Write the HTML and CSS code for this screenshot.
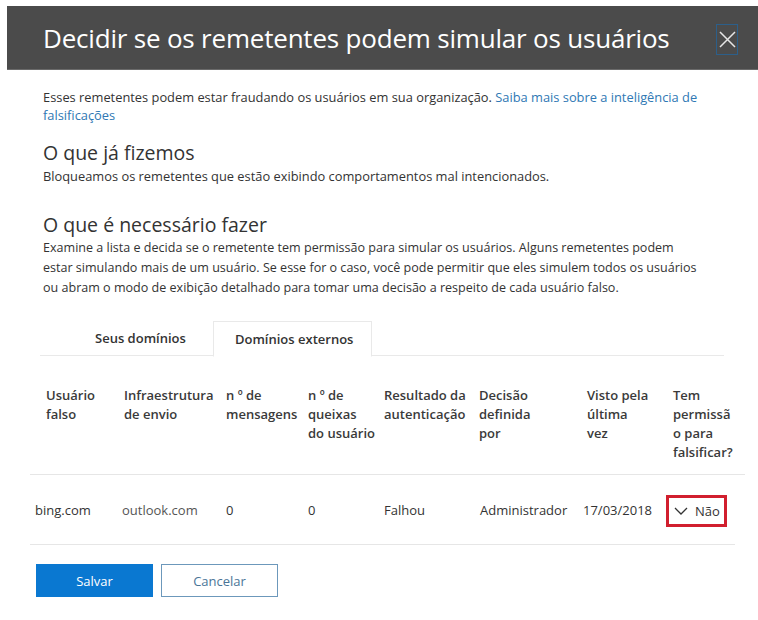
FILE: index.html
```html
<!DOCTYPE html>
<html lang="pt-BR">
<head>
<meta charset="utf-8">
<title>Decidir se os remetentes podem simular os usuários</title>
<link rel="stylesheet" href="styles.css">
</head>
<body>
<div class="panel">
  <header class="head">
    <h1 class="title">Decidir se os remetentes podem simular os usuários</h1>
    <button class="close" aria-label="Fechar">
      <svg width="17" height="17" viewBox="0 0 17 17"><path d="M1 1 L16 16 M16 1 L1 16" stroke="#e6e6e6" stroke-width="1.5" fill="none"/></svg>
    </button>
  </header>
  <main class="content">
    <p class="intro">Esses remetentes podem estar fraudando os usuários em sua organização. <a href="#" class="link">Saiba mais sobre a inteligência de<br>falsificações</a></p>
    <h2 class="section-title first">O que já fizemos</h2>
    <p class="text">Bloqueamos os remetentes que estão exibindo comportamentos mal intencionados.</p>
    <h2 class="section-title second">O que é necessário fazer</h2>
    <p class="text para">Examine a lista e decida se o remetente tem permissão para simular os usuários. Alguns remetentes podem<br>estar simulando mais de um usuário. Se esse for o caso, você pode permitir que eles simulem todos os usuários<br>ou abram o modo de exibição detalhado para tomar uma decisão a respeito de cada usuário falso.</p>

    <div class="tabs">
      <div class="tab">Seus domínios</div>
      <div class="tab active">Domínios externos</div>
    </div>

    <div class="table">
      <div class="thead">
        <div>Usuário<br>falso</div>
        <div>Infraestrutura<br>de envio</div>
        <div>n º de<br>mensagens</div>
        <div>n º de<br>queixas<br>do usuário</div>
        <div>Resultado da<br>autenticação</div>
        <div>Decisão<br>definida<br>por</div>
        <div>Visto pela<br>última<br>vez</div>
        <div>Tem<br>permissã<br>o para<br>falsificar?</div>
      </div>
      <div class="trow">
        <div>bing.com</div>
        <div class="muted">outlook.com</div>
        <div>0</div>
        <div>0</div>
        <div>Falhou</div>
        <div>Administrador</div>
        <div>17/03/2018</div>
        <div><span class="select"><svg width="14" height="8" viewBox="0 0 14 8"><path d="M1 1 L7 7 L13 1" stroke="#333" stroke-width="1.3" fill="none"/></svg>Não</span></div>
      </div>
    </div>

    <div class="actions">
      <button class="btn primary">Salvar</button>
      <button class="btn secondary">Cancelar</button>
    </div>
  </main>
</div>
</body>
</html>
```
FILE: styles.css
```css
* { box-sizing: border-box; }
html, body { margin: 0; padding: 0; background: #fff; }
body {
  font-family: "Open Sans", "Noto Sans", sans-serif;
  color: #333;
  width: 758px;
  height: 620px;
  overflow: hidden;
}
.panel { padding: 6px 0 0 7px; }
.head {
  height: 64px;
  background: #4b4b4b;
  display: flex;
  align-items: center;
  justify-content: space-between;
  padding: 0 20px 0 36px;
  border-bottom: 1px solid #6a6a6a;
}
.title {
  margin: 0;
  font-weight: 400;
  font-size: 26px;
  color: #fff;
  letter-spacing: -0.2px;
}
.close {
  width: 22px;
  height: 31px;
  padding: 0;
  margin-top: 4px;
  background: transparent;
  border: 1px solid #2c5f8a;
  display: flex;
  align-items: center;
  justify-content: center;
}
.content { padding: 18px 0 0 36px; }
.intro, .text {
  margin: 0;
  font-size: 12.85px;
  line-height: 18px;
  white-space: nowrap;
}
.text { line-height: 20px; }
.link { color: #2f78b4; text-decoration: none; }
.section-title {
  margin: 0;
  font-weight: 400;
  font-size: 19.5px;
  line-height: 26px;
}
.section-title.first { margin-top: 16px; }
.section-title.second { margin-top: 26px; }
.para { font-size: 12.55px; }
.tabs {
  margin: 23px 0 0 -3px;
  width: 684px;
  display: flex;
  border-bottom: 1px solid #e9e9e9;
  padding-left: 55px;
  height: 35px;
}
.tab {
  font-size: 13px;
  font-weight: 600;
  height: 35px;
  line-height: 34px;
  padding: 0 21px 0 0;
}
.tab:first-child { width: 118px; }
.tab.active {
  width: 159px;
  padding: 0 0 0 21px;
  border: 1px solid #e9e9e9;
  border-bottom: 1px solid #fff;
  height: 36px;
  background: #fff;
}
.table { margin: 0 0 0 -13px; width: 715px; }
.thead {
  display: grid;
  grid-template-columns: 78px 102px 82px 76px 95px 108px 86px 1fr;
  padding: 30px 0 12px 16px;
  font-size: 13px;
  font-weight: 600;
  line-height: 19px;
  color: #3a3a3a;
  border-bottom: 1px solid #e6e6e6;
}
.trow {
  display: grid;
  grid-template-columns: 87px 104px 82px 76px 96px 103px 83px 1fr;
  padding: 0 0 0 5px;
  height: 70px;
  align-items: center;
  font-size: 13px;
  color: #333;
  border-bottom: 1px solid #e6e6e6;
  width: 705px;
}
.muted { color: #555; }
.select {
  display: inline-flex;
  align-items: center;
  gap: 7px;
  border: 3px solid #d11f2e;
  height: 32px;
  width: 61px;
  padding-left: 5px;
  margin-top: 2px;
}
.actions {
  display: flex;
  gap: 8px;
  margin: 19px 0 0 -7px;
}
.btn {
  font-family: inherit;
  font-size: 13px;
  width: 117px;
  height: 33px;
  cursor: pointer;
}
.btn.primary { background: #0a78d1; color: #fff; border: none; }
.btn.secondary { background: #fff; color: #4a7597; border: 1px solid #6c98bb; }
```
